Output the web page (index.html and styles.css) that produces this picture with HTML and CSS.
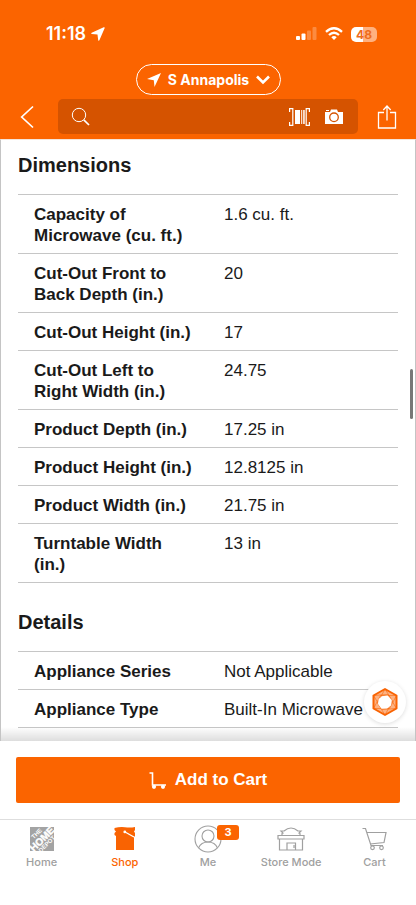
FILE: index.html
```html
<!DOCTYPE html>
<html lang="en">
<head>
<meta charset="utf-8">
<meta name="viewport" content="width=device-width, initial-scale=1">
<title>Product specifications</title>
<link rel="stylesheet" href="styles.css">
</head>
<body>
<header class="header">
  <div class="status">
    <div class="status-side">
      <span class="clock">11:18</span>
      <svg width="14" height="14" viewBox="0 0 14 14"><path d="M13.700.9 8.400 13.300q-.7 1-1.200-.1L6.500 7.500.7 6.900q-1.100-.5 0-1.200L12.700.200q1.200-.3 1 .7z" fill="#fff"/></svg>
    </div>
    <div class="status-side status-icons">
      <svg width="21" height="14" viewBox="0 0 21 14" fill="#fff"><rect y="9" width="4" height="4" rx="1"/><rect x="5.500" y="6.500" width="4" height="6.500" rx="1"/><rect x="11" y="3.500" width="4" height="9.500" rx="1" opacity=".25"/><rect x="16.500" y="0" width="4" height="13" rx="1" opacity=".25"/></svg>
      <svg width="18" height="14" viewBox="0 0 18 14" fill="none" stroke="#fff" stroke-width="2.300"><path d="M1 4.900Q9-2.500 17 4.900M4 8Q9 3.500 14 8"/><path d="M9 13 6.300 10.200Q9 8 11.700 10.200z" fill="#fff" stroke="none"/></svg>
      <span class="battery">48</span>
    </div>
  </div>
  <button class="store" type="button">
    <svg width="14" height="14" viewBox="0 0 14 14"><path d="M14 0 7.500 14 6.800 7.200 0 6z" fill="#fff"/></svg>
    S Annapolis
    <svg width="14" height="10" viewBox="0 0 14 10" fill="none" stroke="#fff" stroke-width="2.600"><path d="m1 1.500 6 6 6-6"/></svg>
  </button>
  <div class="searchbar">
    <button class="icon-button" type="button" aria-label="Back"><svg width="14" height="24" viewBox="0 0 14 24" fill="none" stroke="#fff" stroke-width="1.700"><path d="M13 1.500 1.700 12 13 22.500"/></svg></button>
    <div class="search">
      <svg width="19" height="19" viewBox="0 0 19 19" fill="none" stroke="#fff"><circle cx="8" cy="8" r="6.700" stroke-width="1"/><path d="m12.800 12.800 5.200 5.200" stroke-width="1.700"/></svg>
      <input class="search-input" type="search" aria-label="Search">
      <button class="icon-button" type="button" aria-label="Scan barcode"><svg width="21" height="18" viewBox="0 0 21 18"><path d="M0 .7h3.800v16.600H0M.600 .7V4M.600 17.300V14M21 .7h-3.800v16.600H21M20.400 .7V4M20.400 17.300V14" fill="none" stroke="#fff" stroke-width="1.200"/><path d="M6 2h5v14H6zM12.200 2h1v14h-1zM14.200 2h1.500v14h-1.500z" fill="#fff"/></svg></button>
      <button class="icon-button" type="button" aria-label="Search by photo"><svg width="18" height="15" viewBox="0 0 18 15"><path d="M0 3h5l1-2.500h6L13 3h5v12H0zM1 1h3v1H1z" fill="#fff"/><circle cx="9" cy="8.300" r="4.300" fill="none" stroke="#d55300" stroke-width="1.300"/></svg></button>
    </div>
    <button class="icon-button" type="button" aria-label="Share"><svg width="20" height="24" viewBox="0 0 20 24" fill="none" stroke="#fff" stroke-width="1.300"><path d="M7 7.500H1.500V23h17V7.500H13M10 15.500V2M6.300 5 10 1l3.700 4"/></svg></button>
  </div>
</header>

<div class="viewport">
  <main class="content">
    <section>
      <h2 class="title">Dimensions</h2>
      <table class="specs">
        <tbody>
          <tr><th scope="row">Capacity of Microwave (cu. ft.)</th><td>1.6 cu. ft.</td></tr>
          <tr><th scope="row">Cut-Out Front to Back Depth (in.)</th><td>20</td></tr>
          <tr><th scope="row">Cut-Out Height (in.)</th><td>17</td></tr>
          <tr><th scope="row">Cut-Out Left to Right Width (in.)</th><td>24.75</td></tr>
          <tr><th scope="row">Product Depth (in.)</th><td>17.25 in</td></tr>
          <tr><th scope="row">Product Height (in.)</th><td>12.8125 in</td></tr>
          <tr><th scope="row">Product Width (in.)</th><td>21.75 in</td></tr>
          <tr><th scope="row">Turntable Width (in.)</th><td>13 in</td></tr>
        </tbody>
      </table>
    </section>
    <section>
      <h2 class="title">Details</h2>
      <table class="specs">
        <tbody>
          <tr><th scope="row">Appliance Series</th><td>Not Applicable</td></tr>
          <tr><th scope="row">Appliance Type</th><td>Built-In Microwave</td></tr>
          <tr><th scope="row"></th><td></td></tr>
        </tbody>
      </table>
    </section>
  </main>
  <div class="scroll-thumb"></div>
  <div class="edge-shade"></div>
  <button class="assistant" type="button" aria-label="Assistant">
    <svg width="28" height="30" viewBox="0 0 28 30" stroke-linejoin="round"><path d="M14 2 25.500 8.500v13L14 28 2.500 21.500v-13z" fill="#fcb283"/><g stroke="#f96302" stroke-width=".8" stroke-opacity=".7" fill="none"><path d="M2.500 8.500 17 7.500 25.500 21.500M14 2 21.500 14 14 28M25.500 8.500 18.500 21.500 2.500 21.500M25.500 21.500 11 22.500 2.500 8.500M14 28 6.500 16 14 2M2.500 21.500 9.500 8.500 25.500 8.500"/></g><path d="m11 9.200 5.500-.7 4.300 4.500-.8 5.500-4 3-5.500.3L7 17l.7-5z" fill="#fff"/><path d="M14 2 25.500 8.500v13L14 28 2.500 21.500v-13z" fill="none" stroke="#f96302" stroke-width="2"/></svg>
  </button>
</div>

<div class="buy">
  <button class="add" type="button">
    <svg width="18" height="17" viewBox="0 0 18 17"><path d="M.5 1H3.500V13H17" fill="none" stroke="#fff" stroke-width="1.600"/><circle cx="5" cy="14.800" r="2.100" fill="#fff"/><circle cx="14" cy="14.800" r="2.100" fill="#fff"/></svg>
    Add to Cart
  </button>
</div>

<nav class="tabs">
  <a class="tab" href="#home">
    <svg class="tab-icon" width="28" height="28" viewBox="0 0 28 28"><path d="M2 2h24v24H2z" fill="#a3a3a3"/><g transform="rotate(-45 14 14)" fill="#fff" class="logo-text" text-anchor="middle"><text x="14" y="8.500" font-size="6">THE</text><text x="14" y="17.500" font-size="10" stroke="#fff" stroke-width=".4">HOME</text><text x="14" y="23" font-size="6">DEPOT</text></g></svg>
    Home
  </a>
  <a class="tab tab-current" href="#shop" aria-current="page">
    <svg class="tab-icon" width="28" height="28" viewBox="0 0 28 28"><path d="M3.500 3Q9 1.500 14 2.200 19 3 24 2v3l-1 1.500 1 1.500v3l-1 1v13H5V11L3.500 10V8L5 6.500 3.500 5z" fill="#f96302"/><path d="m14 7 9 5" stroke="#fff" stroke-width="1.400"/><circle cx="13.800" cy="6.900" r="1.400" fill="#fff"/></svg>
    Shop
  </a>
  <a class="tab" href="#me">
    <span class="tab-icon avatar">
      <svg width="28" height="28" viewBox="0 0 28 28" fill="none" stroke="#a0a0a0" stroke-width="1.100"><circle cx="14" cy="14" r="13"/><circle cx="14" cy="11" r="6"/><path d="M4.500 23q2.500-6 9.500-6t9.500 6"/></svg>
      <span class="badge">3</span>
    </span>
    Me
  </a>
  <a class="tab" href="#store">
    <svg class="tab-icon" width="28" height="28" viewBox="0 0 28 28" fill="none" stroke="#a0a0a0" stroke-width="1.200"><path d="M1 10.500h26v3.500H1zM2.500 14v11h23V14M10 25v-7h8.500v7M17 20v3M5 10.500V8.500l1-.5-2-2h3q7-6 14 0h3l-2 2 1 .5v2"/></svg>
    Store Mode
  </a>
  <a class="tab" href="#cart">
    <svg class="tab-icon" width="28" height="28" viewBox="0 0 28 28" fill="none" stroke="#a0a0a0" stroke-width="1.200"><path d="M2.500 3.500h3L11 20.500h12M7 7.500h19L24 17.500l-14 1.500"/><circle cx="12.500" cy="22.800" r="1.800"/><circle cx="21.500" cy="22.800" r="1.800"/></svg>
    Cart
  </a>
</nav>
</body>
</html>
```
FILE: styles.css
```css
* {
  box-sizing: border-box;
}

body {
  margin: 0;
  height: 100vh;
  display: flex;
  flex-direction: column;
  overflow: hidden;
  background: #fff;
  color: #1a1a1a;
  font-family: "Liberation Sans", Arial, sans-serif;
}

button {
  margin: 0;
  padding: 0;
  border: 0;
  background: none;
  color: inherit;
  font-family: inherit;
}

svg {
  display: block;
  flex: none;
}

.header {
  flex: none;
  display: flex;
  flex-direction: column;
  align-items: center;
  padding: 24px 17px 5px 18px;
  background: #fb6400;
  color: #fff;
}

.status {
  align-self: stretch;
  display: flex;
  justify-content: space-between;
  align-items: center;
  height: 20px;
  margin-bottom: 20px;
  padding: 0 22px 0 28px;
}

.status-side {
  display: flex;
  align-items: center;
  gap: 5px;
}

.status-icons {
  gap: 8px;
}

.clock {
  font: 600 18px/20px Inter, sans-serif;
}

.battery {
  width: 26px;
  border-radius: 5px;
  background: linear-gradient(to right, #fff 48%, #ffb17f 48%);
  color: #ee6c1c;
  font: 700 12px/15px Inter, sans-serif;
  text-align: center;
}

.store {
  display: flex;
  align-items: center;
  gap: 7px;
  height: 31px;
  margin-bottom: 4px;
  padding: 0 10px;
  border: 1px solid #fff;
  border-radius: 16px;
  font: 700 14px/20px Inter, sans-serif;
}

.searchbar {
  align-self: stretch;
  display: flex;
  align-items: center;
  gap: 17px;
}

.icon-button {
  flex: none;
  padding: 0 2px;
}

.search {
  flex: 1;
  min-width: 0;
  display: flex;
  align-items: center;
  gap: 11px;
  height: 35px;
  margin-left: 5px;
  padding: 0 13px;
  border-radius: 5px;
  background: #d55300;
}

.search-input {
  flex: 1;
  min-width: 0;
  height: 100%;
  padding: 0;
  border: 0;
  outline: 0;
  background: transparent;
  color: #fff;
  font-size: 16px;
}

.viewport {
  position: relative;
  flex: 1;
  min-height: 0;
  overflow: hidden;
  border: 1px solid #c4c4c4;
  border-top-color: #f4e4da;
  border-bottom: 0;
}

.content {
  padding: 10px 17px 0;
}

.title {
  margin: 0;
  padding: 0 0 14px;
  font-size: 20px;
  line-height: 30px;
}

.specs {
  width: 100%;
  margin-bottom: 24px;
  table-layout: fixed;
  border-collapse: collapse;
  font-size: 17px;
  line-height: 21px;
}

.specs tr {
  border: solid #c6c6c6;
  border-width: 1px 0;
}

.specs th,
.specs td {
  width: 50%;
  height: 38px;
  padding: 9px 16px 7px;
  text-align: left;
  vertical-align: top;
}

.specs td {
  padding-right: 0;
}

.scroll-thumb {
  position: absolute;
  top: 229px;
  right: 2px;
  width: 3px;
  height: 50px;
  border-radius: 2px;
  background: #777;
}

.edge-shade {
  position: absolute;
  inset: auto 0 0;
  height: 14px;
  background: linear-gradient(to bottom, transparent, #0002);
}

.assistant {
  position: absolute;
  right: 9px;
  bottom: 18px;
  display: grid;
  place-items: center;
  width: 42px;
  height: 42px;
  border-radius: 50%;
  background: #fff;
  box-shadow: 0 1px 4px #0002;
}

.buy {
  flex: none;
  padding: 16px;
}

.add {
  display: flex;
  justify-content: center;
  align-items: center;
  gap: 8px;
  width: 100%;
  height: 46px;
  border-radius: 2px;
  background: #fb6400;
  color: #fff;
  font-size: 17px;
  font-weight: 700;
}

.tabs {
  flex: none;
  display: grid;
  grid-template-columns: repeat(5, 1fr);
  height: 86px;
  padding-top: 5px;
  border-top: 1px solid #dedede;
}

.tab {
  display: flex;
  flex-direction: column;
  align-items: center;
  gap: 2px;
  color: #a0a0a0;
  font: 500 11px/14px Inter, sans-serif;
  text-decoration: none;
}

.tab-current {
  color: #fb6400;
}

.logo-text {
  font-family: "Liberation Sans", sans-serif;
  font-weight: 700;
}

.avatar {
  position: relative;
}

.badge {
  position: absolute;
  left: 23px;
  top: 0;
  width: 22px;
  border-radius: 3px;
  background: #fb6400;
  color: #fff;
  font-weight: 700;
  line-height: 15px;
  text-align: center;
}
```
